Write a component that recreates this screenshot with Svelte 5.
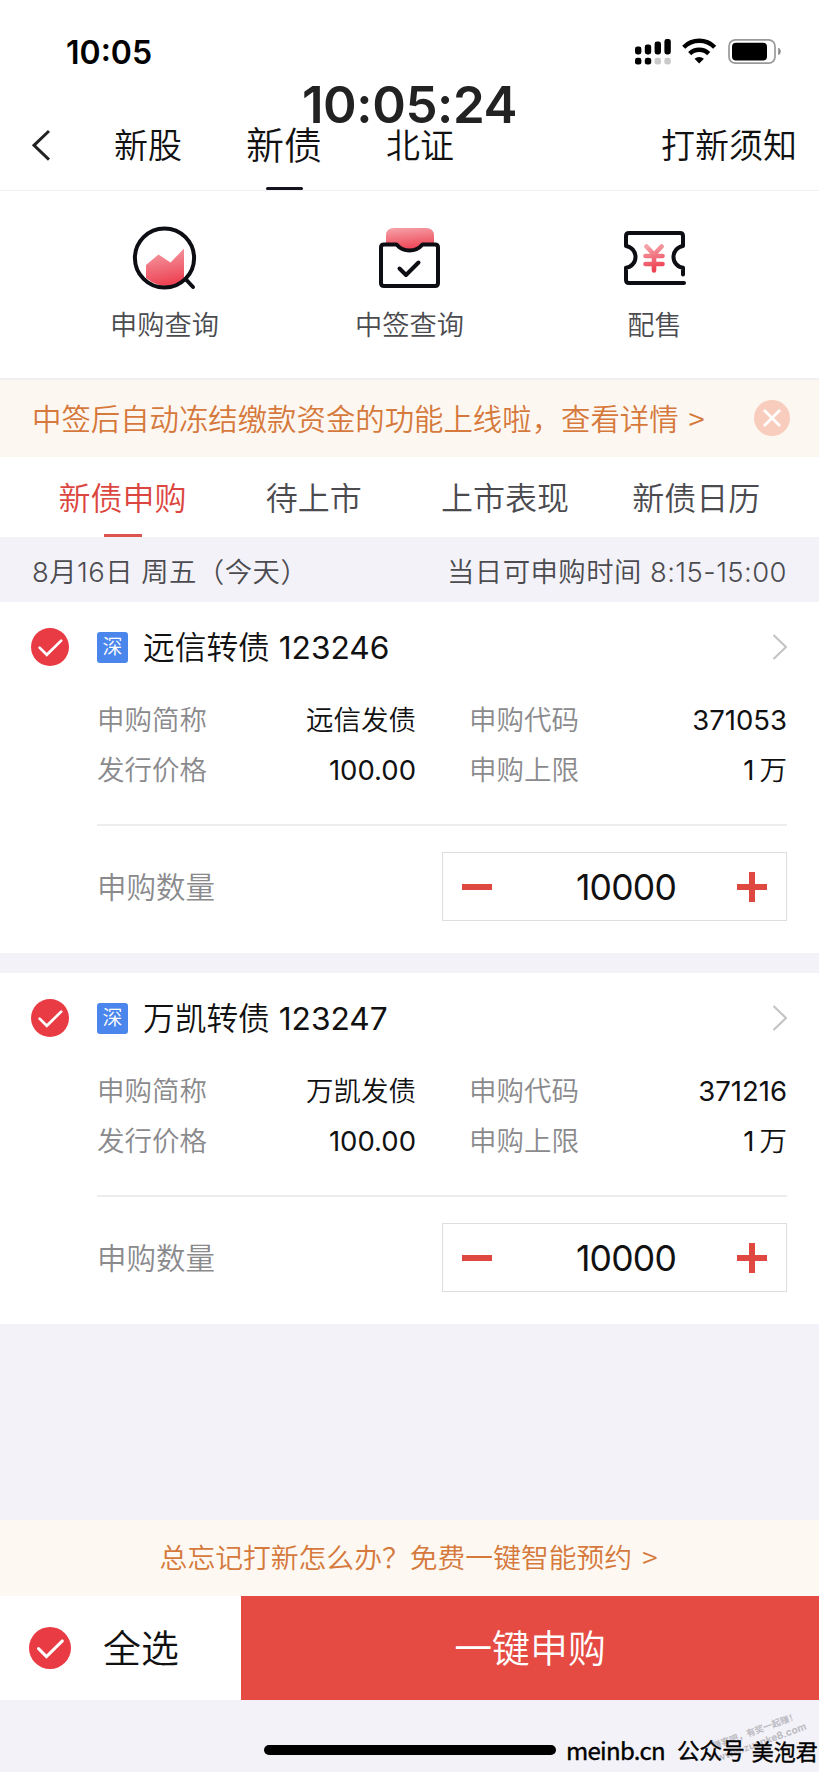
<script>
	const quick = [
		{ id: 'query', label: '申购查询' },
		{ id: 'result', label: '中签查询' },
		{ id: 'placing', label: '配售' }
	];

	const tabs = ['新债申购', '待上市', '上市表现', '新债日历'];
	let current = $state(0);

	let bonds = $state([
		{ name: '远信转债', code: '123246', short: '远信发债', buyCode: '371053', amount: 10000, checked: true },
		{ name: '万凯转债', code: '123247', short: '万凯发债', buyCode: '371216', amount: 10000, checked: true }
	]);

	let allChecked = $derived(bonds.every((b) => b.checked));

	function toggleAll() {
		const next = !allChecked;
		bonds.forEach((b) => (b.checked = next));
	}

	function step(bond, n) {
		bond.amount = Math.min(10000, Math.max(0, bond.amount + n));
	}
</script>

{#snippet check(on, size)}
	<svg width={size} height={size} viewBox="0 0 38 38">
		<circle cx="19" cy="19" r="19" fill={on ? '#e93b43' : '#ddd'} />
		<path d="M8.6 19.6l7.2 7.2L30.2 12.6" fill="none" stroke="#fff" stroke-width="2.7" stroke-linecap="round" />
	</svg>
{/snippet}

<div class="app">
	<div class="status">
		<span class="time">10:05</span>
		<svg width="148" height="28" viewBox="0 0 148 28">
			<g fill="#000">
				<rect x="0" y="8.5" width="6.4" height="8" rx="2.4" />
				<rect x="9.8" y="6.5" width="6.4" height="10" rx="2.4" />
				<rect x="19.6" y="3.5" width="6.4" height="13" rx="2.4" />
				<rect x="29.4" y="1" width="6.4" height="15.5" rx="2.4" />
				<rect x="0" y="19.8" width="6.4" height="6.8" rx="2.4" />
				<rect x="9.8" y="19.8" width="6.4" height="6.8" rx="2.4" />
			</g>
			<g fill="#c9c9c9">
				<rect x="19.6" y="19.8" width="6.4" height="6.8" rx="2.4" />
				<rect x="29.4" y="19.8" width="6.4" height="6.8" rx="2.4" />
			</g>
			<g fill="none" stroke="#000" stroke-width="4.4">
				<path d="M48.7 9.2a22 22 0 0 1 31 0" />
				<path d="M54.7 15.6a13.6 13.6 0 0 1 19 0" />
			</g>
			<path d="M59.5 20.7a7 7 0 0 1 9.4 0l-4.7 4.8z" fill="#000" />
			<rect x="94" y="1.8" width="46" height="23.4" rx="6.5" fill="#fff" stroke="#999" stroke-width="1.7" />
			<rect x="97" y="4.8" width="35" height="17.6" rx="4" />
			<path d="M143.2 9.7c3.4 1.2 3.4 6.2 0 7.4z" fill="#888" />
		</svg>
	</div>

	<div class="clock">10:05:24</div>

	<header>
		<svg class="back" width="20" height="32" viewBox="0 0 20 32">
			<path d="M19 2L4 16.3L19 30.6" fill="none" stroke="#222" stroke-width="3" />
		</svg>
		<nav>
			<a href="#stock">新股</a>
			<a href="#bond" class="active">新债</a>
			<a href="#bj">北证</a>
		</nav>
		<a class="notes" href="#notes">打新须知</a>
	</header>

	<section class="quick">
		{#each quick as item}
			<a href="#{item.id}">
				<svg width="68" height="68" viewBox="0 0 68 68" fill="none" stroke="#0d0e14" stroke-width="4" stroke-linecap="round" stroke-linejoin="round">
					<defs>
						<linearGradient id="g-{item.id}" x1="0" y1="0" x2="0.2" y2="1">
							<stop offset="0" stop-color="#f5a3aa" />
							<stop offset="1" stop-color="#ee4455" />
						</linearGradient>
					</defs>
					{#if item.id === 'query'}
						<path d="M15 54V41L27.5 30.5 39.5 38.5 53 24.5V56Q34 69 15 54z" fill="url(#g-query)" stroke="none" />
						<circle cx="33.500" cy="34" r="29.600" />
						<path d="M55 55.500l7 7.500" />
					{:else if item.id === 'result'}
						<path d="M10 20V12q0-8 8-8h32q8 0 8 8v8H47Q44 26.500 34 26.500T21 20z" fill="url(#g-result)" stroke="none" />
						<path d="M8 20.500H20.500C23.500 24 27.500 26.500 33.500 26.500S43.500 24 46.500 20.500H59q3 0 3 3V59q0 3-3 3H8q-3 0-3-3V23.500q0-3 3-3z" />
						<path d="M23.500 44.500l6.500 6.500L42.500 38.500" />
					{:else}
						<path d="M63 59H8q-3 0-3-3V43.800a11 11 0 0 0 0-21.800V12q0-3 3-3H59q3 0 3 3V22a11 11 0 0 0 0 21.800V50.500" />
						<path d="M25.500 22.500l7.500 8 7.500-8M24.500 32h17M24.500 40h17M33 31v15.500" stroke="url(#g-placing)" stroke-width="4.600" />
					{/if}
				</svg>
				<span>{item.label}</span>
			</a>
		{/each}
	</section>

	<div class="notice">
		<p>中签后自动冻结缴款资金的功能上线啦，查看详情<b>&gt;</b></p>
		<svg width="36" height="36" viewBox="0 0 36 36">
			<circle cx="18" cy="18" r="18" fill="#f8cdbd" />
			<path d="M10 10l16 16M26 10L10 26" stroke="#fff" stroke-width="2.800" />
		</svg>
	</div>

	<div class="tabs">
		{#each tabs as tab, i}
			<button class:active={current === i} onclick={() => (current = i)}>{tab}</button>
		{/each}
	</div>

	<div class="date">
		<span>8月16日 周五（今天）</span>
		<span>当日可申购时间 8:15-15:00</span>
	</div>

	<main>
		{#each bonds as bond}
			<article>
				<div class="title">
					<button class="tick" aria-label={bond.name} onclick={() => (bond.checked = !bond.checked)}>
						{@render check(bond.checked, 38)}
					</button>
					<span class="tag">深</span>
					<h2>{bond.name} <span class="num">{bond.code}</span></h2>
					<svg width="16" height="28" viewBox="0 0 16 28">
						<path d="M2.500 2L15 14 2.500 26" fill="none" stroke="#c4c4c6" stroke-width="2.200" />
					</svg>
				</div>
				<dl>
					<dt>申购简称</dt>
					<dd>{bond.short}</dd>
					<dt>申购代码</dt>
					<dd class="num">{bond.buyCode}</dd>
					<dt>发行价格</dt>
					<dd class="num">100.00</dd>
					<dt>申购上限</dt>
					<dd class="limit"><span class="num">1</span>万</dd>
				</dl>
				<div class="amount">
					<span class="label">申购数量</span>
					<div class="stepper">
						<button aria-label="减少" onclick={() => step(bond, -10)}>
							<svg width="30" height="30"><path d="M0 15h30" stroke="#de4840" stroke-width="6" /></svg>
						</button>
						<span class="num">{bond.amount}</span>
						<button aria-label="增加" onclick={() => step(bond, 10)}>
							<svg width="30" height="30"><path d="M0 15h30M15 0v30" stroke="#de4840" stroke-width="6" /></svg>
						</button>
					</div>
				</div>
			</article>
		{/each}
	</main>

	<div class="remind">总忘记打新怎么办？免费一键智能预约<b>&gt;</b></div>

	<footer>
		<button class="all" onclick={toggleAll}>
			{@render check(allChecked, 42)}
			<span>全选</span>
		</button>
		<button class="submit">一键申购</button>
	</footer>

	<div class="home"><i></i></div>

	<div class="stamp">
		<p>赚客吧，有奖一起赚！</p>
		<p class="site">www.zuanke8.com</p>
	</div>
	<div class="source"><span>meinb.cn</span><span>公众号</span><span>美泡君</span></div>
</div>

<style>
	:global(body) {
		background: #f3f2f8;
	}

	.app {
		position: relative;
		display: flex;
		flex-direction: column;
		width: 819px;
		height: 1772px;
		overflow: hidden;
		background: #f3f2f8;
		color: #111;
		font-family: Inter, 'Noto Sans CJK SC', sans-serif;
		font-weight: 350;
	}

	button {
		padding: 0;
		border: 0;
		background: none;
		color: inherit;
		font: inherit;
	}

	a {
		color: inherit;
		text-decoration: none;
	}

	p {
		margin: 0;
	}

	b {
		margin-left: 10px;
		font-weight: inherit;
	}

	svg {
		display: block;
		flex: none;
	}

	.num {
		font-weight: 400;
	}

	.status {
		display: flex;
		align-items: center;
		justify-content: space-between;
		height: 104px;
		padding: 0 36px 0 66px;
		box-sizing: border-box;
		background: #fff;
		flex: none;
	}

	.time {
		font-size: 32px;
		font-weight: 600;
		color: #000;
	}

	.clock {
		position: absolute;
		top: 74px;
		left: 0;
		width: 819px;
		line-height: 61px;
		font-size: 51px;
		font-weight: 600;
		letter-spacing: -0.4px;
		color: #222;
		text-align: center;
		z-index: 2;
	}

	header {
		display: flex;
		height: 87px;
		box-sizing: border-box;
		padding: 0 22px 0 30px;
		background: #fff;
		border-bottom: 1px solid #f1f1f3;
		flex: none;
		line-height: 83px;
		font-size: 34px;
	}

	.back {
		margin-top: 25px;
	}

	nav {
		display: flex;
		flex: 1;
		margin-left: 64px;
	}

	nav a {
		width: 68px;
	}

	nav .active {
		display: flex;
		flex-direction: column;
		align-items: center;
		justify-content: space-between;
		width: 76px;
		margin: 0 64px 0 64px;
		font-size: 38px;
	}

	nav .active::after {
		content: '';
		width: 37px;
		height: 3px;
		border-radius: 2px;
		background: #14141f;
	}

	.quick {
		display: flex;
		height: 189px;
		box-sizing: border-box;
		padding-top: 33px;
		background: #fff;
		border-bottom: 2px solid #f0f0f1;
		flex: none;
	}

	.quick a {
		display: flex;
		flex: none;
		flex-direction: column;
		align-items: center;
		width: 245px;
		font-size: 27.200px;
		line-height: 67px;
		color: #4b4b50;
	}

	.quick a:first-child {
		margin-left: 42px;
	}

	.notice {
		display: flex;
		align-items: center;
		justify-content: space-between;
		height: 77px;
		padding: 0 29px 0 32px;
		background: #fdf7f1;
		color: #d5793c;
		font-size: 29.400px;
		font-family: 'Noto Sans CJK SC', sans-serif;
		flex: none;
	}

	.notice p {
		padding-bottom: 4px;
	}

	.notice svg {
		margin-bottom: 1px;
	}

	.tabs {
		display: flex;
		height: 80px;
		padding: 0 27px;
		background: #fff;
		flex: none;
	}

	.tabs button {
		display: flex;
		flex: 1;
		flex-direction: column;
		align-items: center;
		justify-content: space-between;
		font-size: 32px;
		line-height: 77px;
		padding-top: 3px;
		color: #4b4b4f;
	}

	.tabs .active {
		color: #dc4640;
	}

	.tabs .active::after {
		content: '';
		width: 38px;
		height: 3px;
		margin-top: -3px;
		background: #dc5450;
	}

	.date {
		display: flex;
		align-items: center;
		justify-content: space-between;
		height: 65px;
		padding: 0 32px;
		font-size: 27.400px;
		letter-spacing: 0.45px;
		color: #4b4b50;
		flex: none;
	}

	main {
		display: flex;
		flex-direction: column;
		gap: 20px;
		flex: 1;
	}

	article {
		height: 351px;
		box-sizing: border-box;
		padding: 0 32px 0 97px;
		background: #fff;
	}

	.title {
		display: flex;
		align-items: center;
		height: 90px;
		margin-left: -66px;
	}

	.tag {
		width: 31px;
		height: 31px;
		margin: 0 15px 0 28px;
		border-radius: 3px;
		background: #4a86ec;
		color: #fff;
		font-size: 20px;
		line-height: 30px;
		text-align: center;
	}

	h2 {
		flex: 1;
		margin: 0;
		padding-top: 2px;
		font-size: 31.700px;
		font-weight: 350;
		line-height: 46px;
	}

	dl {
		display: grid;
		grid-template-columns: 110px 209px 163px 1fr;
		grid-auto-rows: 50px;
		height: 134px;
		margin: 0;
		padding-top: 3px;
		box-sizing: border-box;
		border-bottom: 2px solid #ededee;
		font-size: 27.500px;
		line-height: 50px;
	}

	dt {
		color: #8a8a8d;
		white-space: nowrap;
	}

	dt:nth-of-type(even) {
		padding-left: 53px;
	}

	dd {
		margin: 0;
		text-align: right;
	}

	.limit span {
		margin-right: 5px;
	}

	.amount {
		display: flex;
		align-items: center;
		justify-content: space-between;
		height: 121px;
		font-size: 29.500px;
		color: #8a8a8d;
	}

	.label {
		padding-bottom: 3px;
	}

	.stepper {
		display: flex;
		align-items: center;
		justify-content: space-between;
		width: 345px;
		height: 69px;
		padding: 0 19px;
		box-sizing: border-box;
		border: 1px solid #dedee0;
		color: #111;
		font-size: 35.500px;
		letter-spacing: -0.800px;
	}

	.stepper span {
		margin-left: 23px;
		padding-top: 2px;
	}

	.remind {
		height: 76px;
		padding-right: 2px;
		background: #fdf8f1;
		color: #d5793c;
		font-family: 'Noto Sans CJK SC', sans-serif;
		font-size: 27.800px;
		line-height: 72px;
		text-align: center;
		flex: none;
	}

	footer {
		display: flex;
		height: 104px;
		font-size: 37.900px;
		flex: none;
	}

	.all {
		display: flex;
		align-items: center;
		gap: 32px;
		width: 241px;
		padding-left: 29px;
		background: #fff;
		color: #111;
	}

	.all span {
		padding-bottom: 5px;
	}

	.submit {
		flex: 1;
		padding-bottom: 5px;
		background: #e54b43;
		color: #fff;
	}

	.home {
		height: 72px;
		padding: 45px 0 0 264px;
		box-sizing: border-box;
		flex: none;
	}

	.home i {
		display: block;
		width: 292px;
		height: 10px;
		border-radius: 5px;
		background: #000;
	}

	.stamp {
		position: absolute;
		right: 13px;
		bottom: 24px;
		color: #bcbbc2;
		font-size: 9px;
		font-weight: 700;
		line-height: 12px;
		transform: rotate(-20deg);
	}

	.site {
		font-size: 10px;
	}

	.source {
		position: absolute;
		left: 566px;
		bottom: 4px;
		display: flex;
		color: #000;
		font-family: 'Noto Sans CJK SC', sans-serif;
		font-size: 22.600px;
		font-weight: 400;
		line-height: 36px;
		white-space: nowrap;
		-webkit-text-stroke: 0.4px #000;
	}

	.source span:first-child {
		width: 111px;
		font-size: 24px;
		letter-spacing: -0.700px;
	}

	.source span:last-child {
		margin-left: 7px;
		font-size: 22px;
	}
</style>
